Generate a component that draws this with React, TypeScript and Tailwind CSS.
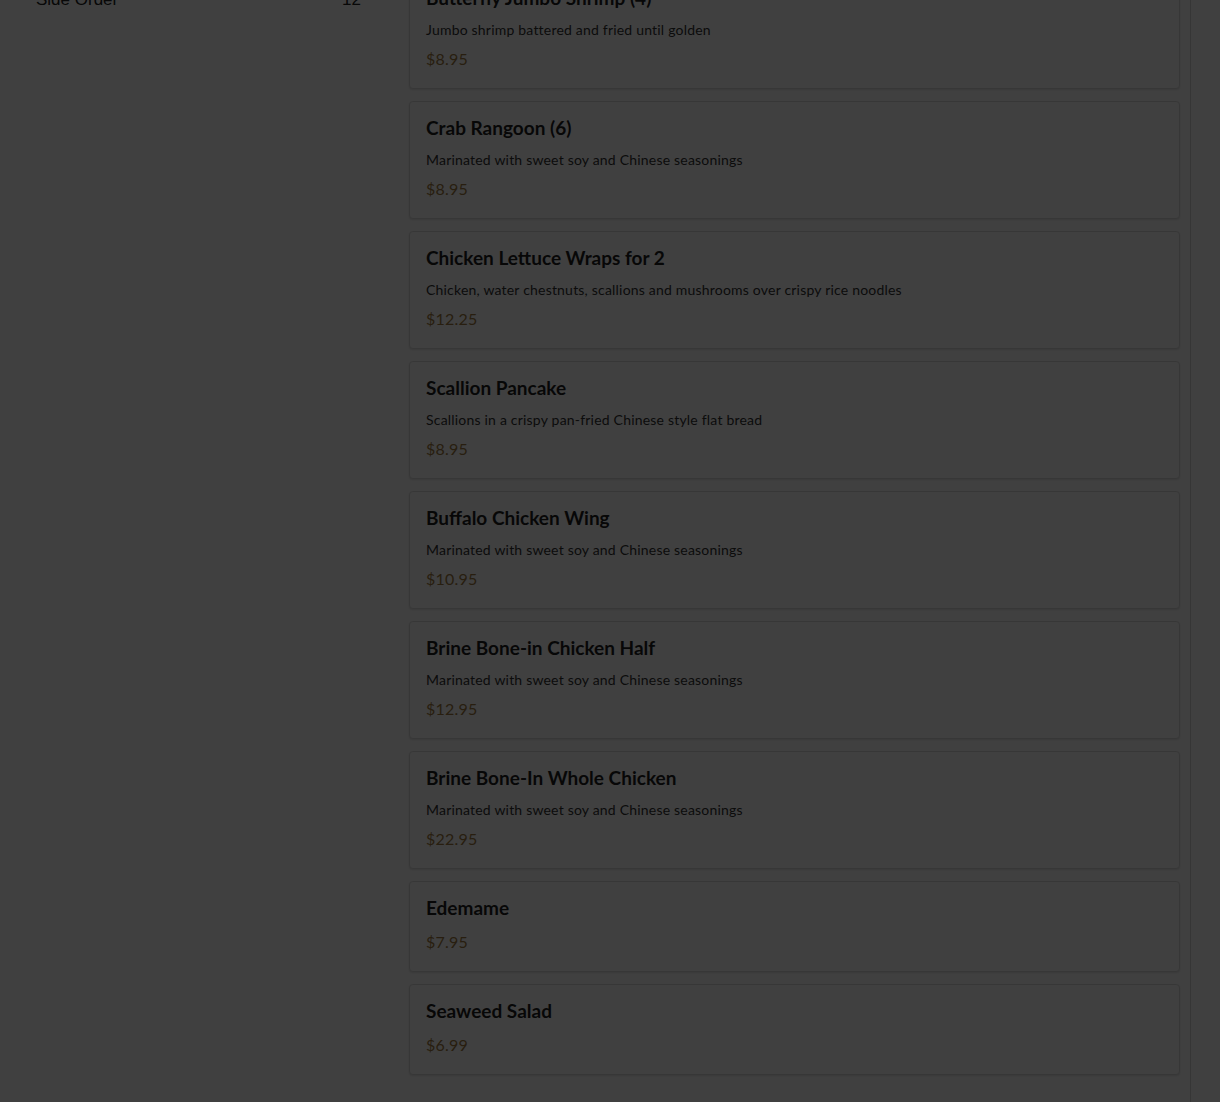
type MenuItem = {
  name: string;
  description?: string;
  price: string;
};

const ITEMS: MenuItem[] = [
  { name: 'Butterfly Jumbo Shrimp (4)', description: 'Jumbo shrimp battered and fried until golden', price: '$8.95' },
  { name: 'Crab Rangoon (6)', description: 'Marinated with sweet soy and Chinese seasonings', price: '$8.95' },
  { name: 'Chicken Lettuce Wraps for 2', description: 'Chicken, water chestnuts, scallions and mushrooms over crispy rice noodles', price: '$12.25' },
  { name: 'Scallion Pancake', description: 'Scallions in a crispy pan-fried Chinese style flat bread', price: '$8.95' },
  { name: 'Buffalo Chicken Wing', description: 'Marinated with sweet soy and Chinese seasonings', price: '$10.95' },
  { name: 'Brine Bone-in Chicken Half', description: 'Marinated with sweet soy and Chinese seasonings', price: '$12.95' },
  { name: 'Brine Bone-In Whole Chicken', description: 'Marinated with sweet soy and Chinese seasonings', price: '$22.95' },
  { name: 'Edemame', price: '$7.95' },
  { name: 'Seaweed Salad', price: '$6.99' },
];

function ItemCard({ item }: { item: MenuItem }) {
  return (
    <div className="bg-white border border-[#dcdcdc] rounded-[4px] shadow-[0_1px_2px_rgba(0,0,0,0.12)] px-4 pt-4 pb-[17px] font-['Lato','Open_Sans',sans-serif]">
      <h3 className="text-[19px] leading-[20px] font-bold text-[#1e1e1e] mb-[12px]">{item.name}</h3>
      {item.description && (
        <p className="text-[14px] leading-[20px] tracking-[0.2px] text-[#333] mb-[7px]">{item.description}</p>
      )}
      <div className={`text-[16px] leading-[24px] tracking-[0.2px] text-[#a07a40] ${item.description ? '' : 'mt-px'}`}>
        {item.price}
      </div>
    </div>
  );
}

export default function App() {
  return (
    <div className="relative min-h-[1102px] bg-white overflow-hidden">
      <div className="flex">
        <aside className="w-[325px] ml-[36px] shrink-0 -mt-[10px] font-['Liberation_Sans',Arial,sans-serif]">
          <div className="flex justify-between text-[17px] leading-[20px] text-[#222]">
            <span>Side Order</span>
            <span>12</span>
          </div>
        </aside>
        <div className="ml-[48px] w-[782px] pr-[10px] border-r border-[#d6d6d6] min-h-[1102px]">
          <div className="flex flex-col gap-[12px] -mt-[29px] pb-8">
            {ITEMS.map((item) => (
              <ItemCard key={item.name} item={item} />
            ))}
          </div>
        </div>
      </div>
      <div className="fixed inset-0 bg-black/75" />
    </div>
  );
}
